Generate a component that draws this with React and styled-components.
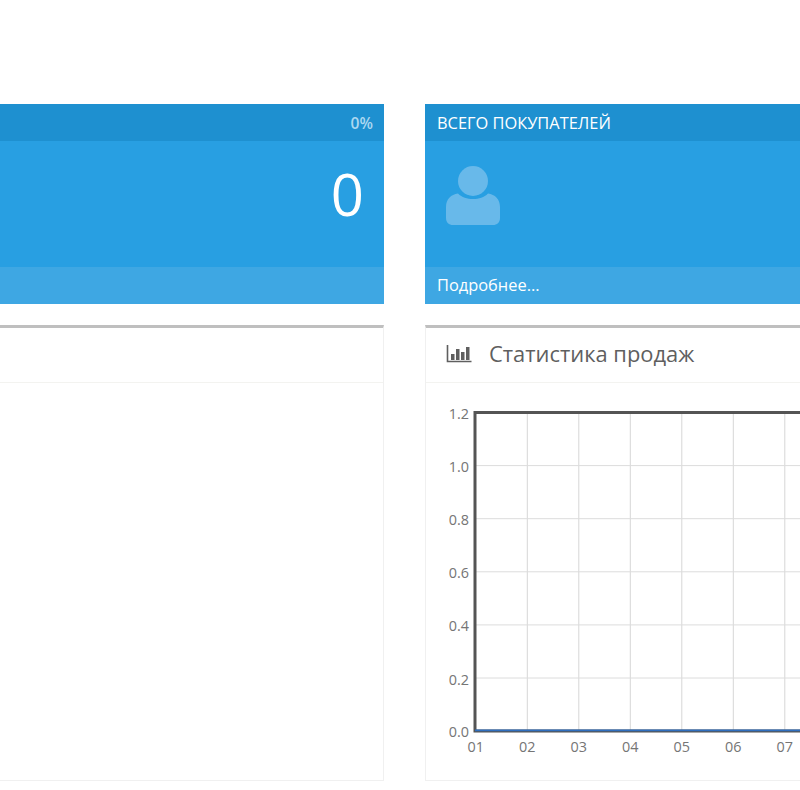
import styled, { createGlobalStyle } from "styled-components";

const GlobalStyle = createGlobalStyle`
html, body {
    margin: 0;
    padding: 0;
    background: #fff;
    overflow: hidden;
}
body {
    font-family: "Open Sans", "Liberation Sans", sans-serif;
}
`;

const Page = styled.div`
    width: 800px;
    height: 790px;
    overflow: hidden;
`;

const Grid = styled.div`
    display: grid;
    grid-template-columns: 400px 400px;
    column-gap: 41px;
    row-gap: 21px;
    margin-left: -16px;
    padding-top: 104px;
`;

const StatCard = styled.div`
    height: 200px;
    display: flex;
    flex-direction: column;
    background: #289fe2;
    color: #fff;
`;

const StatHead = styled.div`
    height: 37px;
    padding: 0 11px 0 12px;
    display: flex;
    align-items: center;
    justify-content: space-between;
    background: #1e90d0;
    font-size: 16.4px;
`;

const Percent = styled.span`
    color: #add8f1;
    font-size: 15.6px;
    font-weight: 600;
`;

const StatBody = styled.div`
    flex: 1;
    padding: 0 20px 0 21px;
    display: flex;
    align-items: center;
    justify-content: space-between;
`;

const StatIcon = styled.svg`
    display: block;
    width: 54px;
    height: 60px;
    margin-bottom: 17px;
    fill: #68b9ea;
`;

const StatValue = styled.div`
    font-size: 58px;
    line-height: 60px;
    margin-bottom: 21px;
`;

const StatFoot = styled.div`
    height: 37px;
    padding: 0 12px 2px;
    box-sizing: border-box;
    display: flex;
    align-items: center;
    background: #3ea7e3;
    font-size: 16.4px;
`;

const Panel = styled.div`
    height: 456px;
    box-sizing: border-box;
    display: flex;
    flex-direction: column;
    background: #fff;
    border: 1px solid #f0f0f0;
    border-top: 3px solid #bfbfbf;
`;

const PanelHead = styled.div`
    height: 51px;
    flex: none;
    padding: 0 0 3px 20px;
    display: flex;
    align-items: center;
    gap: 17px;
    border-bottom: 1px solid #f3f3f0;
    color: #5f5f5f;
    font-size: 21.9px;
`;

const PanelBody = styled.div`
    flex: 1;
    min-height: 0;
`;

const Chart = styled.svg`
    display: block;
    width: 374px;
    height: 398px;
    font-family: "Open Sans", "Liberation Sans", sans-serif;
    font-size: 14.4px;
    fill: #757575;
`;

const xTicks = ["01", "02", "03", "04", "05", "06", "07"];
const yTicks = ["1.2", "1.0", "0.8", "0.6", "0.4", "0.2", "0.0"];
const xAt = (i) => 49.8 + i * 51.5;
const yAt = (i) => 29.5 + i * 53.1;

function ChartIcon() {
    return (
        <svg width="26" height="18" viewBox="0 0 26 18">
            <path d="M1.5 0v16.5h24" fill="none" stroke="#5f5f5f" strokeWidth="1.6" />
            <path d="M5 9h3.500v6H5zM10 4h3.500v11H10zM15 7h3.500v8H15zM20 2h3.500v13H20z" fill="#5f5f5f" />
        </svg>
    );
}

function SalesChart() {
    return (
        <Chart viewBox="0 0 374 398">
            {xTicks.map((t, i) => (
                <g key={t}>
                    {i > 0 && <line x1={xAt(i)} x2={xAt(i)} y1={yAt(0)} y2={yAt(6)} stroke="#d6d6d6" />}
                    <text x={xAt(i)} y={yAt(6) + 21} textAnchor="middle">{t}</text>
                </g>
            ))}
            {yTicks.map((t, i) => (
                <g key={t}>
                    {i > 0 && i < 6 && <line x1={49} x2={374} y1={yAt(i)} y2={yAt(i)} stroke="#dcdcdc" />}
                    <text x={43} y={yAt(i) + (i < 6 ? 6.5 : 5.5)} textAnchor="end">{t}</text>
                </g>
            ))}
            <path d={`M374 ${yAt(0)}H49V${yAt(6)}H374`} fill="none" stroke="#545454" strokeWidth="3" />
            <line x1={49} x2={374} y1={yAt(6) - 0.8} y2={yAt(6) - 0.8} stroke="#2f6fc0" strokeWidth="1.8" />
        </Chart>
    );
}

function App() {
    return (
        <Page>
            <GlobalStyle />
            <Grid>
                <StatCard>
                    <StatHead>
                        <span />
                        <Percent>0%</Percent>
                    </StatHead>
                    <StatBody>
                        <span />
                        <StatValue>0</StatValue>
                    </StatBody>
                    <StatFoot />
                </StatCard>
                <StatCard>
                    <StatHead>
                        <span>ВСЕГО ПОКУПАТЕЛЕЙ</span>
                    </StatHead>
                    <StatBody>
                        <StatIcon viewBox="0 0 54 60">
                            <circle cx="27" cy="15" r="15" />
                            <path d="M12 27.500C16 31.500 21 33 27 33s11-1.500 15-5.500C49 28.500 54 33 54 41v11c0 4.500-3 7-7 7H7c-4 0-7-2.500-7-7V41c0-8 5-12.500 12-13.500z" />
                        </StatIcon>
                    </StatBody>
                    <StatFoot>Подробнее...</StatFoot>
                </StatCard>
                <Panel>
                    <PanelHead />
                    <PanelBody />
                </Panel>
                <Panel>
                    <PanelHead>
                        <ChartIcon />
                        <span>Статистика продаж</span>
                    </PanelHead>
                    <PanelBody>
                        <SalesChart />
                    </PanelBody>
                </Panel>
            </Grid>
        </Page>
    );
}

export default App;
